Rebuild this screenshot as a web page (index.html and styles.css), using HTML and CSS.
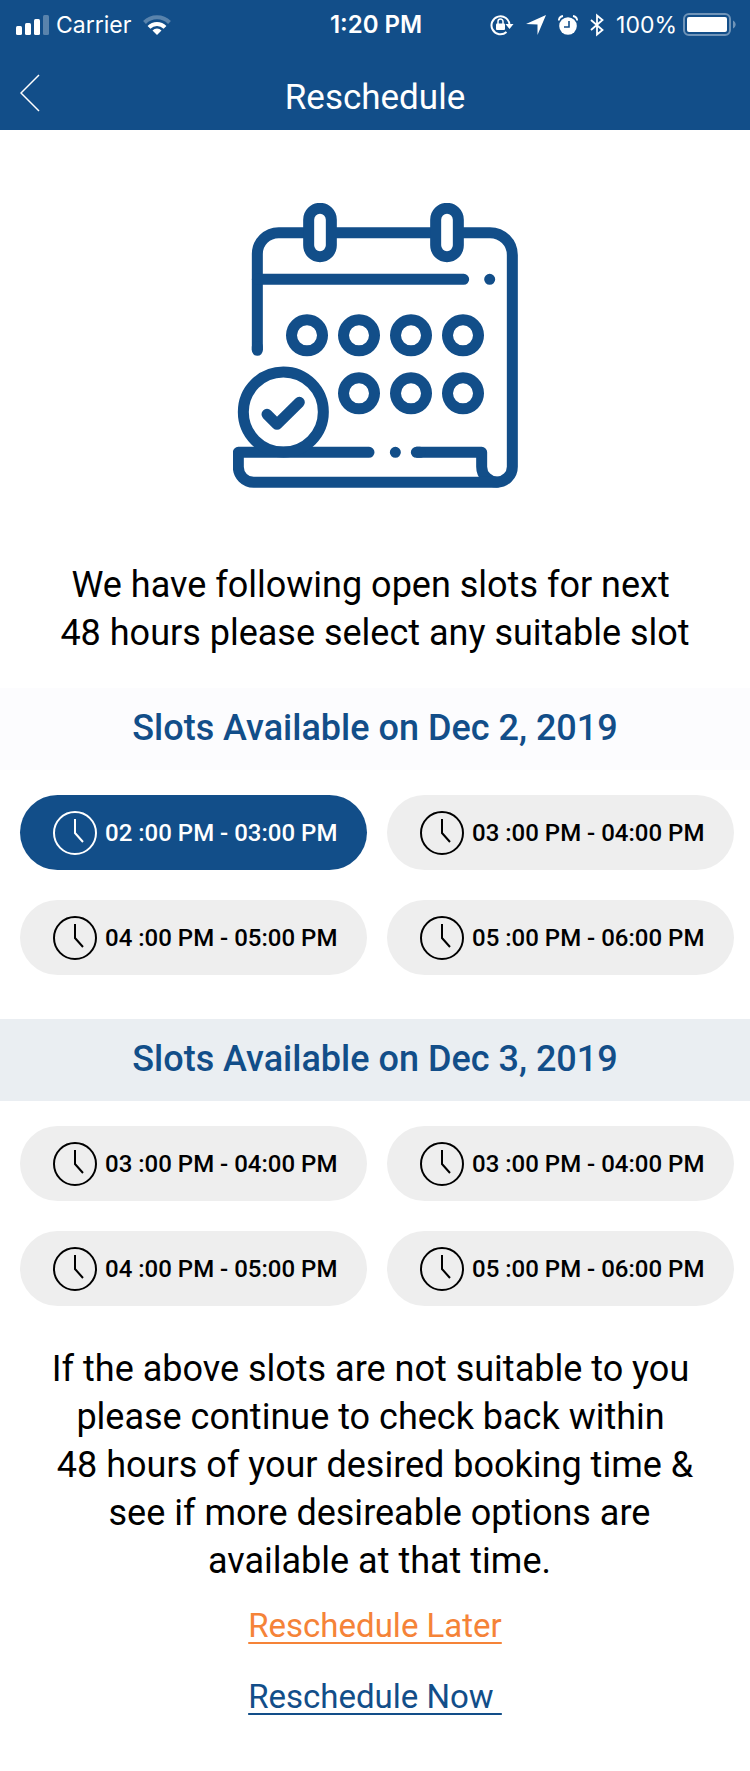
FILE: index.html
```html
<!DOCTYPE html>
<html lang="en">
<head>
<meta charset="utf-8">
<meta name="viewport" content="width=device-width, initial-scale=1">
<title>Reschedule</title>
<link rel="stylesheet" href="styles.css">
</head>
<body>
<svg class="defs" aria-hidden="true">
  <symbol id="clock" viewBox="0 0 44 44">
    <circle cx="22" cy="22" r="21" fill="none" stroke="currentColor" stroke-width="2"/>
    <path d="M22 8v14l8 9" fill="none" stroke="currentColor" stroke-width="2"/>
  </symbol>
</svg>
<header class="header">
  <div class="status">
    <div class="status-side">
      <svg width="33" height="20" viewBox="0 0 33 20" fill="#fff" aria-hidden="true">
        <rect x="0" y="11" width="6" height="9" rx="1.5"/>
        <rect x="9" y="8" width="6" height="12" rx="1.5"/>
        <rect x="18" y="4" width="6" height="16" rx="1.5"/>
        <rect x="27" y="0" width="6" height="20" rx="1.5" opacity=".3"/>
      </svg>
      <span class="carrier">Carrier</span>
      <svg width="28" height="20" viewBox="0 0 28 20" aria-hidden="true">
        <path d="M1.500 7.500A17.500 17.500 0 0 1 26.500 7.500" fill="none" stroke="#fff" stroke-width="4" opacity=".3"/>
        <path d="M6 12.300A11.300 11.300 0 0 1 22 12.300" fill="none" stroke="#fff" stroke-width="4"/>
        <path d="M14 20l-4.500-4.600a6.400 6.400 0 0 1 9 0z" fill="#fff"/>
      </svg>
    </div>
    <span class="time">1:20 PM</span>
    <div class="status-side status-right">
      <svg width="24" height="22" viewBox="0 0 24 22" aria-hidden="true">
        <path d="M19.500 11A9 9 0 1 0 16.500 18" fill="none" stroke="#fff" stroke-width="2"/>
        <path d="M15.500 10h8l-4 5z" fill="#fff"/>
        <rect x="6" y="9.500" width="9" height="6.500" rx="1" fill="#fff"/>
        <path d="M8 10V7.500a2.500 2.500 0 0 1 5 0V10" fill="none" stroke="#fff" stroke-width="1.500"/>
      </svg>
      <svg width="20" height="20" viewBox="0 0 20 20" aria-hidden="true"><path d="M20 0L11.500 20V9.500L0 9z" fill="#fff"/></svg>
      <svg width="20" height="20" viewBox="0 0 20 20" aria-hidden="true">
        <circle cx="10" cy="11" r="8.800" fill="#fff"/>
        <path d="M.8 5.500A5 5 0 0 1 5 1M19.200 5.500A5 5 0 0 0 15 1" fill="none" stroke="#fff" stroke-width="1.800"/>
        <path d="M11 6v6H6" fill="none" stroke="#124e89" stroke-width="1.600"/>
      </svg>
      <svg width="14" height="24" viewBox="0 0 14 24" aria-hidden="true"><path d="M1 7l11.500 10L7 21.500V2.500L12.500 7 1 17" fill="none" stroke="#fff" stroke-width="1.800"/></svg>
      <span class="percent">100%</span>
      <svg width="53" height="24" viewBox="0 0 53 24" aria-hidden="true">
        <rect x="1" y="1" width="46" height="21" rx="5" fill="none" stroke="#fff" stroke-width="2" opacity=".4"/>
        <rect x="4" y="4" width="40" height="15" rx="2" fill="#fff"/>
        <path d="M50 7.500c3.500 1.500 3.500 6.500 0 8z" fill="#fff" opacity=".4"/>
      </svg>
    </div>
  </div>
  <nav class="nav">
    <button class="back" type="button" aria-label="Back">
      <svg width="20" height="38" viewBox="0 0 20 38" aria-hidden="true"><path d="M19 1L1 19l18 18" fill="none" stroke="#fff" stroke-width="1.500"/></svg>
    </button>
    <h1 class="title">Reschedule</h1>
  </nav>
</header>
<main>
  <svg class="calendar" viewBox="39 39 855 855" fill="none" stroke="currentColor" stroke-width="33" stroke-linecap="round" stroke-linejoin="round" aria-hidden="true">
    <path d="M112 481V192a64 64 0 0 1 64-64h83M341 128h299M722 128h88a67 67 0 0 1 67 67V830a46 46 0 0 1-92 0V787H589" stroke-linecap="butt"/>
    <path d="M112 470v11M600 787h-11"/>
    <path d="M831 877H101a46 46 0 0 1-46-46V787H447M112 268H731"/>
    <rect x="266" y="55" width="68" height="145" rx="34"/>
    <rect x="647" y="55" width="68" height="145" rx="34"/>
    <circle cx="261" cy="436" r="46.500"/><circle cx="417" cy="436" r="46.500"/><circle cx="573" cy="436" r="46.500"/><circle cx="729" cy="436" r="46.500"/>
    <circle cx="417" cy="610" r="46.500"/><circle cx="573" cy="610" r="46.500"/><circle cx="729" cy="610" r="46.500"/>
    <circle cx="190" cy="666" r="120"/>
    <path d="M141 673l30 30 67-66M809 268h.1M526 787h.1"/>
  </svg>
  <p class="message">We have following open slots for next&nbsp;<br>48 hours please select any suitable slot</p>

  <section>
    <h2 class="day">Slots Available on Dec 2, 2019</h2>
    <div class="slots">
      <label class="slot"><input type="radio" name="slot" checked><svg class="clock" aria-hidden="true"><use href="#clock"/></svg>02 :00 PM - 03:00 PM</label>
      <label class="slot"><input type="radio" name="slot"><svg class="clock" aria-hidden="true"><use href="#clock"/></svg>03 :00 PM - 04:00 PM</label>
      <label class="slot"><input type="radio" name="slot"><svg class="clock" aria-hidden="true"><use href="#clock"/></svg>04 :00 PM - 05:00 PM</label>
      <label class="slot"><input type="radio" name="slot"><svg class="clock" aria-hidden="true"><use href="#clock"/></svg>05 :00 PM - 06:00 PM</label>
    </div>
  </section>

  <section>
    <h2 class="day day-shaded">Slots Available on Dec 3, 2019</h2>
    <div class="slots">
      <label class="slot"><input type="radio" name="slot"><svg class="clock" aria-hidden="true"><use href="#clock"/></svg>03 :00 PM - 04:00 PM</label>
      <label class="slot"><input type="radio" name="slot"><svg class="clock" aria-hidden="true"><use href="#clock"/></svg>03 :00 PM - 04:00 PM</label>
      <label class="slot"><input type="radio" name="slot"><svg class="clock" aria-hidden="true"><use href="#clock"/></svg>04 :00 PM - 05:00 PM</label>
      <label class="slot"><input type="radio" name="slot"><svg class="clock" aria-hidden="true"><use href="#clock"/></svg>05 :00 PM - 06:00 PM</label>
    </div>
  </section>

  <p class="message message-end">If the above slots are not suitable to you&nbsp;<br>please continue to check back within&nbsp;<br>48 hours of your desired booking time &amp;<br>&nbsp;see if more desireable options are<br>&nbsp;available at that time.</p>
  <div class="actions">
    <a class="action action-later" href="#later">Reschedule Later</a>
    <a class="action" href="#now">Reschedule Now&nbsp;</a>
  </div>
</main>
</body>
</html>
```
FILE: styles.css
```css
* {
  box-sizing: border-box;
}

body {
  margin: 0;
  background: #fff;
  color: #000;
  font-family: Roboto, "Liberation Sans", sans-serif;
}

h1, h2, p {
  margin: 0;
}

.defs {
  display: block;
  width: 0;
  height: 0;
}

.header {
  background: #124e89;
  color: #fff;
}

.status {
  display: grid;
  grid-template-columns: 1fr auto 1fr;
  align-items: center;
  height: 50px;
  padding: 0 14px 0 16px;
  font-family: Inter, "Liberation Sans", sans-serif;
  font-size: 23px;
  line-height: 32px;
}

.status-side {
  display: flex;
  align-items: center;
}

.carrier {
  margin: 0 12px 0 7px;
}

.time {
  font-size: 24px;
  font-weight: 600;
}

.status-right {
  justify-content: flex-end;
  gap: 12px;
}

.percent {
  margin-right: -6px;
}

.nav {
  display: grid;
  grid-template-columns: 60px 1fr 60px;
  height: 80px;
}

.back {
  display: flex;
  align-items: flex-start;
  padding: 24px 0 0 20px;
  border: 0;
  background: none;
}

.title {
  padding-top: 24px;
  font-size: 35px;
  font-weight: 400;
  line-height: 48px;
  text-align: center;
}

.calendar {
  display: block;
  width: 285px;
  height: 285px;
  margin: 73px auto;
  color: #124e89;
}

.message {
  padding-bottom: 31px;
  font-size: 36px;
  line-height: 48px;
  text-align: center;
}

.day {
  padding: 16px 0 18px;
  background: #fcfcfe;
  color: #124e89;
  font-size: 36px;
  font-weight: 500;
  line-height: 48px;
  text-align: center;
}

.day-shaded {
  background: #eaeef2;
}

.slots {
  display: grid;
  grid-template-columns: 1fr 1fr;
  gap: 30px 20px;
  padding: 25px 16px 44px 20px;
}

.slot {
  display: flex;
  align-items: center;
  gap: 8px;
  height: 75px;
  padding-left: 33px;
  border-radius: 38px;
  background: #eee;
  font-size: 24px;
  font-weight: 500;
  white-space: nowrap;
  cursor: pointer;
}

.slot:has(input:checked) {
  background: #124e89;
  color: #fff;
}

.slot input {
  position: absolute;
  width: 1px;
  height: 1px;
  margin: 0;
  opacity: 0;
}

.clock {
  flex: none;
  width: 44px;
  height: 44px;
}

.message-end {
  margin-top: -5px;
  padding-bottom: 21px;
}

.actions {
  display: flex;
  flex-direction: column;
  align-items: center;
  gap: 31px;
  padding-bottom: 54px;
}

.action {
  color: #124e89;
  font-size: 33px;
  line-height: 40px;
  text-decoration: underline;
  text-decoration-thickness: 2px;
  text-underline-offset: 5px;
}

.action-later {
  color: #f58338;
}
```
